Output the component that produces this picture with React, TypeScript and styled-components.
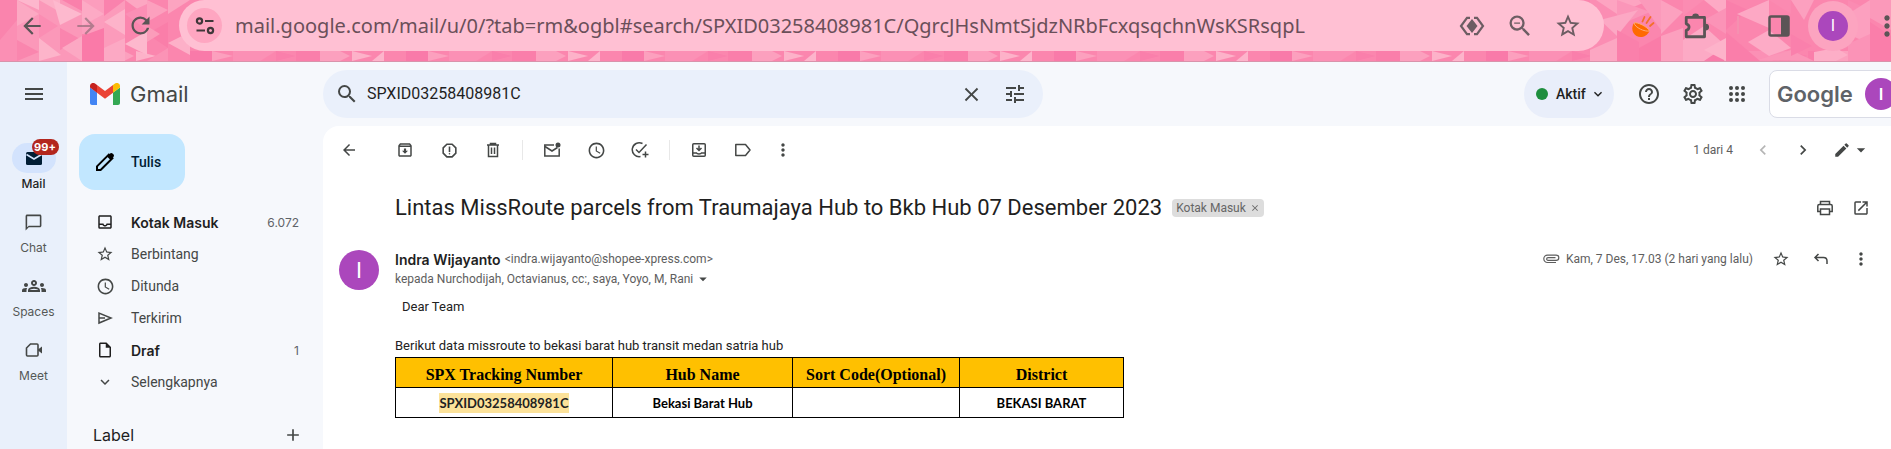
import React from "react";
import styled, { createGlobalStyle, css } from "styled-components";
import {
  MdAdd,
  MdArrowBack,
  MdArrowDropDown,
  MdArrowForward,
  MdChevronLeft,
  MdChevronRight,
  MdClose,
  MdEdit,
  MdHelpOutline,
  MdKeyboardArrowDown,
  MdMenu,
  MdMoreVert,
  MdOpenInNew,
  MdOutlineArchive,
  MdOutlineChatBubbleOutline,
  MdOutlineGroups,
  MdOutlineInbox,
  MdOutlineInsertDriveFile,
  MdOutlineReport,
  MdOutlineSettings,
  MdRefresh,
  MdSchedule,
  MdSearch,
  MdStarBorder,
  MdTune,
  MdZoomOut,
} from "react-icons/md";

const ui = `Inter, Roboto, "Liberation Sans", sans-serif`;
const text = `Roboto, "Liberation Sans", sans-serif`;

const Global = createGlobalStyle`
  * { box-sizing: border-box; }
  body { margin: 0; overflow: hidden; font-family: ${ui}; color: #1f1f1f; background: #f6f8fc; }
  button, input { font: inherit; color: inherit; }
  a { color: inherit; text-decoration: none; }
`;

const Page = styled.div`
  display: flex;
  flex-direction: column;
  min-height: 100vh;
`;

/* ---------- browser bar ---------- */

const BrowserBar = styled.header`
  position: relative;
  display: flex;
  align-items: flex-start;
  height: 62px;
  padding-left: 5px;
  border-bottom: 1px solid #d993ab;
  background: #fb86ae;
  overflow: hidden;
`;

const Mosaic = styled.svg<{ $side: "left" | "right" | "all" }>`
  position: absolute;
  top: 0;
  height: 61px;
  ${(p) => p.$side === "left" && css`left: 0; width: 200px;`}
  ${(p) => p.$side === "right" && css`right: 0; width: 301px;`}
  ${(p) => p.$side === "all" && css`left: 0; width: 100%;`}
`;

const BarButton = styled.button<{ $dim?: boolean }>`
  position: relative;
  display: flex;
  align-items: center;
  justify-content: center;
  flex: none;
  width: 54px;
  height: 51px;
  padding: 0;
  border: 0;
  background: none;
  color: #5b5456;
  opacity: ${(p) => (p.$dim ? 0.45 : 1)};
`;

const BarDivider = styled.span`
  position: relative;
  flex: none;
  width: 2px;
  height: 18px;
  margin: 16px 13px;
  background: #f590b0;
`;

const BarTools = styled.div`
  display: flex;
  flex: none;
  margin-left: 12px;
  margin-right: -23px;
`;

const Halo = styled.span`
  display: flex;
  align-items: center;
  justify-content: center;
  width: 50px;
  height: 50px;
  border-radius: 50%;
  background: #fca4c0;
`;

const Initial = styled.span<{ $size: number }>`
  display: flex;
  align-items: center;
  justify-content: center;
  flex: none;
  width: ${(p) => p.$size}px;
  height: ${(p) => p.$size}px;
  border-radius: 50%;
  background: #ab47bc;
  color: #fff;
  font-family: ${text};
  font-size: ${(p) => (p.$size > 36 ? 22 : 16)}px;
`;

const Omnibox = styled.div`
  position: relative;
  display: flex;
  align-items: center;
  flex: 1;
  min-width: 0;
  height: 51px;
  margin-left: 12px;
  padding-left: 8px;
  padding-right: 12px;
  border-radius: 26px;
  background: #ffc0d3;
`;

const SiteButton = styled.button`
  display: flex;
  align-items: center;
  justify-content: center;
  flex: none;
  width: 35px;
  height: 35px;
  padding: 0;
  border: 0;
  border-radius: 50%;
  background: #fea6c1;
  color: #40373a;
`;

const Address = styled.input`
  flex: 1;
  min-width: 0;
  margin-left: 13px;
  padding: 0;
  border: 0;
  outline: 0;
  background: none;
  color: #6a4f59;
  font-family: "Noto Sans", "Open Sans", sans-serif;
  font-size: 20px;
  line-height: 30px;
`;

const OmniIcon = styled.button`
  display: flex;
  align-items: center;
  justify-content: center;
  flex: none;
  width: 48px;
  height: 48px;
  padding: 0;
  border: 0;
  background: none;
  color: #6d5d63;
`;

/* ---------- mail shell ---------- */

const Shell = styled.div`
  display: flex;
  flex: 1;
  background: #f6f8fc;
`;

const Rail = styled.nav`
  display: flex;
  flex-direction: column;
  align-items: center;
  flex: none;
  width: 67px;
  padding-top: 20px;
  background: #e9f0fb;
`;

const PlainButton = styled.button<{ $size?: number; $color?: string }>`
  display: flex;
  align-items: center;
  justify-content: center;
  flex: none;
  width: ${(p) => p.$size ?? 24}px;
  height: ${(p) => p.$size ?? 24}px;
  padding: 0;
  border: 0;
  background: none;
  color: ${(p) => p.$color ?? "#444746"};
`;

const RailItem = styled.a`
  display: flex;
  flex-direction: column;
  align-items: center;
  width: 100%;
  height: 64px;
  font-size: 12px;
  line-height: 16px;
  color: #444746;
`;

const RailList = styled.div`
  width: 100%;
  padding-top: 37px;
`;

const RailIcon = styled.span<{ $active?: boolean }>`
  position: relative;
  display: flex;
  align-items: center;
  justify-content: center;
  width: 44px;
  height: 30px;
  margin-bottom: 3px;
  border-radius: 15px;
  background: ${(p) => (p.$active ? "#d3e3fd" : "none")};
`;

const RailLabel = styled.span<{ $active?: boolean }>`
  font-weight: ${(p) => (p.$active ? 500 : 400)};
  color: ${(p) => (p.$active ? "#1f1f1f" : "#555856")};
`;

const Badge = styled.span`
  position: absolute;
  top: -4px;
  left: 20px;
  width: 27px;
  border-radius: 8px;
  background: #b3261e;
  color: #fff;
  font-size: 11px;
  font-weight: 700;
  line-height: 16px;
  text-align: center;
`;

const Main = styled.div`
  display: flex;
  flex-direction: column;
  flex: 1;
  min-width: 0;
`;

const TopBar = styled.div`
  display: flex;
  align-items: center;
  height: 64px;
`;

const Brand = styled.a`
  display: flex;
  align-items: center;
  flex: none;
  gap: 10px;
  width: 256px;
  padding-left: 23px;
  font-size: 22px;
  line-height: 28px;
  color: #444746;
`;

const SearchForm = styled.form`
  display: flex;
  align-items: center;
  flex: 0 1 720px;
  height: 48px;
  padding: 0 16px 0 12px;
  border-radius: 24px;
  background: #eaf0fb;
`;

const SearchInput = styled.input`
  flex: 1;
  min-width: 0;
  margin-left: 8px;
  padding: 0;
  border: 0;
  outline: 0;
  background: none;
  font-family: ${text};
  font-size: 16px;
  line-height: 24px;
  color: #1f1f1f;
`;

const SearchActions = styled.div`
  display: flex;
  gap: 20px;
`;

const TopActions = styled.div`
  display: flex;
  align-items: center;
  flex: none;
  margin-left: auto;
  margin-right: -14px;
`;

const Status = styled.button`
  display: flex;
  align-items: center;
  width: 90px;
  height: 48px;
  margin-right: 23px;
  padding: 0 0 0 12px;
  border: 0;
  border-radius: 24px;
  background: #e9eefa;
  font-family: ${text};
  font-size: 14px;
  font-weight: 500;
`;

const StatusText = styled.span`
  margin-right: 4px;
`;

const Dot = styled.span`
  width: 12px;
  height: 12px;
  margin-right: 8px;
  border-radius: 50%;
  background: #1e8e3e;
`;

const IconRow = styled.div`
  display: flex;
  gap: 20px;
`;

const Account = styled.a`
  display: flex;
  align-items: center;
  justify-content: space-between;
  width: 136px;
  height: 48px;
  margin-left: 20px;
  padding: 0 7px;
  border: 1px solid #dadce6;
  border-radius: 8px;
  background: #fff;
  color: #5f6368;
  font-size: 22px;
  font-weight: 600;
`;

const Columns = styled.div`
  display: flex;
  flex: 1;
`;

const Sidebar = styled.aside`
  display: flex;
  flex-direction: column;
  flex: none;
  width: 256px;
  padding: 8px 24px 0 12px;
`;

const Compose = styled.button`
  display: flex;
  align-items: center;
  align-self: flex-start;
  gap: 14px;
  width: 106px;
  height: 56px;
  padding: 0 0 0 14px;
  border: 0;
  border-radius: 16px;
  background: #c2e7ff;
  color: #001d35;
  font-family: ${text};
  font-size: 14px;
  font-weight: 500;
`;

const Folders = styled.nav`
  margin-top: 16px;
`;

const Folder = styled.a<{ $bold?: boolean }>`
  display: flex;
  align-items: center;
  height: 32px;
  padding-left: 16px;
  font-family: ${(p) => (p.$bold ? ui : text)};
  font-size: 14px;
  font-weight: ${(p) => (p.$bold ? 600 : 400)};
  color: ${(p) => (p.$bold ? "#1f1f1f" : "#444746")};
`;

const FolderIcon = styled.span`
  display: flex;
  align-items: center;
  justify-content: center;
  width: 20px;
`;

const FolderName = styled.span`
  flex: 1;
  margin-left: 16px;
`;

const Count = styled.span`
  font-size: 12px;
  font-weight: 400;
  color: #5f6368;
`;

const LabelHeader = styled.div`
  display: flex;
  align-items: center;
  justify-content: space-between;
  height: 24px;
  margin-top: 25px;
  margin-right: -6px;
  padding-left: 14px;
`;

const LabelTitle = styled.h2`
  margin: 0;
  font-size: 16px;
  font-weight: 400;
`;

const Panel = styled.main`
  flex: 1;
  min-width: 0;
  border-radius: 16px 0 0 0;
  background: #fff;
`;

const Toolbar = styled.div`
  display: flex;
  align-items: center;
  height: 48px;
  padding: 0 20px 0 4px;
`;

const ToolGroup = styled.div<{ $first?: boolean }>`
  display: flex;
  align-items: center;
  margin-left: ${(p) => (p.$first ? 12 : 0)}px;
`;

const ToolDivider = styled.span`
  width: 1px;
  height: 20px;
  margin: 0 7px;
  background: #e8e8e8;
`;

const Pager = styled.div`
  display: flex;
  align-items: center;
  margin-left: auto;
  font-family: ${text};
  font-size: 12px;
  color: #5e5e5e;
`;

const PagerText = styled.span`
  margin-right: 20px;
`;

const InputTools = styled.button`
  display: flex;
  align-items: center;
  justify-content: flex-end;
  width: 38px;
  height: 24px;
  padding: 0;
  border: 0;
  background: none;
  color: #444746;
`;

const SubjectRow = styled.div`
  display: flex;
  align-items: center;
  height: 32px;
  margin-top: 18px;
  padding: 0 18px 0 72px;
`;

const Subject = styled.h1`
  margin: 0;
  font-family: ${text};
  font-size: 22px;
  font-weight: 400;
  line-height: 28px;
  color: #1f1f1f;
`;

const Chip = styled.span`
  display: flex;
  align-items: center;
  gap: 4px;
  height: 18px;
  margin-left: 10px;
  padding: 0 4px;
  border-radius: 4px;
  background: #ddd;
  color: #666;
  font-family: ${text};
  font-size: 12px;
`;

const ChipClose = styled.button`
  display: flex;
  padding: 0;
  border: 0;
  background: none;
`;

const RowActions = styled.div<{ $gap: number }>`
  display: flex;
  align-items: center;
  gap: ${(p) => p.$gap}px;
  margin-left: auto;
`;

const Message = styled.article`
  display: grid;
  grid-template-columns: 72px 1fr;
  padding: 25px 18px 0 0;
`;

const AvatarCell = styled.div`
  padding: 1px 0 0 16px;
`;

const SenderLine = styled.div`
  display: flex;
  align-items: center;
  height: 20px;
`;

const Sender = styled.strong`
  font-size: 14px;
  font-weight: 600;
`;

const Email = styled.span`
  margin-left: 4px;
  font-family: ${text};
  font-size: 12px;
  color: #5e5e5e;
`;

const Meta = styled.span`
  display: flex;
  align-items: center;
  gap: 6px;
  font-family: ${text};
  font-size: 12px;
  color: #5e5e5e;
`;

const Recipients = styled.div`
  display: flex;
  align-items: center;
  height: 20px;
  font-family: ${text};
  font-size: 12px;
  color: #5e5e5e;
`;

const MailBody = styled.div`
  padding-top: 8px;
  font-family: ${text};
  color: #222;
`;

const Greeting = styled.p`
  margin: 0 0 19px 7px;
  font-size: 13px;
  line-height: 20px;
`;

const Intro = styled.p`
  margin: 0 0 1px;
  font-size: 13px;
  line-height: 20px;
`;

const Table = styled.table`
  width: 728px;
  table-layout: fixed;
  border-collapse: collapse;
  color: #000;
  text-align: center;
`;

const HeadCell = styled.th<{ $w: number }>`
  width: ${(p) => p.$w}px;
  height: 30px;
  padding: 4px 0 0;
  border: 1px solid #000;
  background: #ffc000;
  font-family: "Liberation Serif", serif;
  font-size: 16px;
  font-weight: 700;
`;

const Cell = styled.td`
  height: 30px;
  padding: 0;
  border: 1px solid #000;
  font-family: Lato, sans-serif;
  font-size: 13px;
  font-weight: 700;
`;

const Mark = styled.mark`
  padding: 2px 0;
  background: #fce29a;
  color: #222;
`;

/* ---------- drawings ---------- */

type Tri = [string, string];

const leftTris: Tri[] = [
  ["0,0 17,0 17,61 0,61", "#fa84ad"],
  ["0,40 17,20 17,61 0,61", "#fb8fb4"],
  ["17,0 82,0 82,61 17,61", "#fb98b9"],
  ["17,0 39,0 39,10", "#fdb7cd"],
  ["17,0 39,14 17,26", "#fca9c3"],
  ["17,40 39,52 17,61", "#fa86ae"],
  ["39,0 60,0 60,12", "#fcb0c7"],
  ["53,0 82,14 60,25", "#fdb9ce"],
  ["62,0 82,0 82,11", "#fa80ab"],
  ["39,14 58,26 39,38", "#fb8db3"],
  ["39,38 61,55 39,61", "#fdb4ca"],
  ["60,28 82,40 60,50", "#fa85ae"],
  ["62,48 82,36 82,61", "#fca8c3"],
  ["82,0 104,0 104,34 82,34", "#fc9dbd"],
  ["82,0 104,14 82,26", "#fdaac5"],
  ["82,36 104,28 104,61 82,61", "#fa7aa8"],
  ["104,0 125,0 125,61 104,61", "#fc9bbb"],
  ["104,22 125,9 125,35", "#fdb3ca"],
  ["104,0 125,0 104,16", "#fa82ad"],
  ["104,48 125,38 125,61 104,61", "#fca9c4"],
  ["125,0 147,0 147,16", "#fca7c2"],
  ["125,44 147,31 147,55", "#fdb8cd"],
  ["125,14 147,4 147,30", "#fb8fb5"],
  ["147,0 168,10 147,22", "#fca0be"],
  ["147,34 168,22 168,48", "#fa7ea9"],
  ["147,61 168,48 168,61", "#fb93b6"],
  ["168,0 190,0 168,14", "#fca4c0"],
  ["168,43 190,32 190,55", "#fdb0c8"],
  ["147,26 160,34 147,42", "#fb9cba"],
];

const rightTris: Tri[] = [
  ["0,0 27,0 27,61 0,61", "#fb8db3"],
  ["6,0 27,14 60,0", "#fda4c1"],
  ["27,0 60,12 27,26", "#fb96b9"],
  ["10,20 48,10 27,36", "#fca8c4"],
  ["0,50 27,38 27,61 0,61", "#fca6c2"],
  ["27,30 49,42 49,61 27,61", "#fa80ab"],
  ["49,48 71,36 71,61 49,61", "#fa7ca8"],
  ["49,0 71,0 71,30", "#fb9abb"],
  ["71,0 93,12 71,34", "#fca1bf"],
  ["71,36 93,28 93,61 71,61", "#fca0be"],
  ["93,0 114,0 93,16", "#fb8cb2"],
  ["93,40 114,26 136,46 114,61 93,61", "#fcaac5"],
  ["114,0 136,0 136,18", "#fdaac5"],
  ["114,20 136,8 136,34", "#fb93b7"],
  ["114,50 136,38 136,61", "#fdb3ca"],
  ["136,0 158,10 136,30", "#fa7fab"],
  ["136,32 170,61 136,61", "#fa7eaa"],
  ["147,14 179,0 179,28", "#fda8c4"],
  ["158,42 179,30 201,48 179,56", "#fdabc6"],
  ["179,0 201,0 201,14", "#fb8ab1"],
  ["168,60 201,50 224,61", "#fb96b8"],
  ["201,0 224,0 214,20", "#fca0bf"],
  ["201,34 222,46 201,56", "#fa80ac"],
  ["224,52 246,48 258,55 246,61 224,61", "#fdaec7"],
  ["258,0 280,10 258,18", "#fb8bb2"],
  ["258,14 280,0 280,44 258,34", "#fca0bf"],
  ["258,44 280,34 280,61 258,61", "#fb93b7"],
  ["280,0 301,0 301,30 280,18", "#fb99ba"],
  ["280,22 301,36 301,61 280,61", "#fa7eaa"],
];

const stripTris: Tri[] = [
  ["0,51 22,51 22,61 0,61", "#f97aa9"],
  ["22,51 43,56 22,61", "#fca0be"],
  ["43,51 86,51 70,61 43,61", "#fb90b5"],
  ["86,51 106,56 86,61", "#fa7fab"],
  ["106,51 130,51 130,61 106,61", "#fa7eaa"],
  ["130,51 150,51 160,56 150,61 130,61", "#fca0be"],
  ["162,51 182,56 162,61", "#fdb2c9"],
  ["182,61 194,51 194,61", "#fdb4cb"],
];

const tris = (list: Tri[]) =>
  list.map(([points, fill], i) => <polygon key={i} points={points} fill={fill} />);

const MosaicBackdrop = () => (
  <>
    <Mosaic $side="all" aria-hidden="true">
      <defs>
        <pattern id="strip" width="216" height="61" patternUnits="userSpaceOnUse" x="190">
          {tris(stripTris)}
        </pattern>
      </defs>
      <rect width="100%" height="61" fill="url(#strip)" />
    </Mosaic>
    <Mosaic $side="left" viewBox="0 0 200 61" aria-hidden="true">{tris(leftTris)}</Mosaic>
    <Mosaic $side="right" viewBox="0 0 301 61" aria-hidden="true">{tris(rightTris)}</Mosaic>
  </>
);

const SiteIcon = () => (
  <svg width="20" height="18" viewBox="0 0 20 18" fill="none" stroke="currentColor" strokeWidth="2.2">
    <circle cx="4.5" cy="4" r="2.6" />
    <path d="M10 4h8.500M1.500 13.500h8.500" />
    <circle cx="15.500" cy="13.500" r="2.600" />
  </svg>
);

const DiamondIcon = () => (
  <svg width="26" height="20" viewBox="0 0 26 20">
    <path d="M11 1.800H8L2 10l6 8.200h3M15 1.800h3L24 10l-6 8.200h-3" fill="none" stroke="currentColor" strokeWidth="2.200" />
    <path d="M13 3 18.500 10 13 17 7.500 10z" fill="currentColor" />
  </svg>
);

const BowlIcon = () => (
  <svg width="24" height="24" viewBox="0 0 24 24">
    <path d="M3 9C0 13.500 1 19.500 5.500 22c4.500 2.500 10.500.5 13-5z" fill="#ff6a00" />
    <path d="M3 9c3-1.500 14 4 15.500 8-5 1-14.500-3.500-15.500-8z" fill="#ff6a00" stroke="#ffab78" strokeWidth="1" />
    <path d="M11.500 7.500l2-4.500M15.500 9l4-6M19 12l3.500-3" stroke="#f4702a" strokeWidth="1.800" strokeLinecap="round" />
  </svg>
);

const PuzzleIcon = () => (
  <svg width="28" height="28" viewBox="0 0 26 26">
    <path d="M3 5h17v18H3v-6c3.500-1 3.500-5 0-6z" fill="none" stroke="currentColor" strokeWidth="2.600" strokeLinejoin="round" />
    <path d="M8.500 4.500a3.200 3.200 0 0 1 6.400 0zM21 10.800a3.200 3.200 0 0 1 0 6.400z" fill="currentColor" />
  </svg>
);

const SidePanelIcon = () => (
  <svg width="22" height="22" viewBox="0 0 22 22">
    <rect x="1.500" y="1.500" width="19" height="19" rx="1.500" fill="none" stroke="currentColor" strokeWidth="2.500" />
    <path d="M13 1h8v20h-8z" fill="currentColor" />
  </svg>
);

const GmailLogo = () => (
  <svg width="30" height="22" viewBox="0 0 30 22">
    <path d="M0 4.500v15.500c0 1.100.9 2 2 2h5V9.500z" fill="#4285f4" />
    <path d="M23 22h5c1.100 0 2-.9 2-2V4.500l-7 5z" fill="#34a853" />
    <path d="M23 2v7.800l7-5.300V3c0-2.600-3-4-5-2.500z" fill="#fbbc04" />
    <path d="M7 9.800V2l8 6 8-6v7.800l-8 6z" fill="#ea4335" />
    <path d="M0 3v1.500l7 5.300V2L5 .5C3-1 0 .4 0 3z" fill="#c5221f" />
  </svg>
);

const MailIcon = () => (
  <svg width="18" height="16" viewBox="0 0 18 16">
    <rect x="1" y="2" width="16" height="13" rx="1.500" fill="#001d35" />
    <path d="M1.500 4.500 9 9l7.500-4.500" fill="none" stroke="#d3e3fd" strokeWidth="1.600" />
  </svg>
);

const MeetIcon = () => (
  <svg width="18" height="16" viewBox="0 0 18 16">
    <path d="M5.500 2H12a1 1 0 0 1 1 1v10a1 1 0 0 1-1 1H2.500a1 1 0 0 1-1-1V6z" fill="none" stroke="currentColor" strokeWidth="1.600" />
    <path d="M13 7.500 17 4.500v7l-4-3z" fill="currentColor" />
  </svg>
);

const PencilIcon = () => (
  <svg width="24" height="24" viewBox="0 0 24 24">
    <path d="M4 20v-3.600L15.800 4.600l3.600 3.600L7.600 20z" fill="none" stroke="#000" strokeWidth="2" />
    <path d="m14 6.500 2.800-2.800c1-1 2-1 3 0l.6.600c.8.800.8 1.800 0 2.700L17.500 10z" fill="#000" />
  </svg>
);

const SendIcon = () => (
  <svg width="16" height="16" viewBox="0 0 16 16" fill="none" stroke="currentColor" strokeWidth="1.500">
    <path d="M2 3v10l12-5z" />
    <path d="M2 8h6" />
  </svg>
);

const TrashIcon = () => (
  <svg width="16" height="16" viewBox="0 0 16 16" fill="none" stroke="currentColor" strokeWidth="1.500">
    <path d="M2 3h12M5.500 2.500v-1h5v1M3.500 3v11.500h9V3M6.500 5.500v6.500M9.500 5.500v6.500" />
  </svg>
);

const UnreadIcon = () => (
  <svg width="18" height="16" viewBox="0 0 18 16">
    <path d="M11 3H1.800v11h14.400V6.500" fill="none" stroke="currentColor" strokeWidth="1.500" />
    <path d="m2 4.500 7 4.500 5.500-3.500" fill="none" stroke="currentColor" strokeWidth="1.500" />
    <circle cx="15" cy="3" r="2.500" fill="currentColor" />
  </svg>
);

const TaskIcon = () => (
  <svg width="18" height="18" viewBox="0 0 18 18" fill="none" stroke="currentColor" strokeWidth="1.500">
    <path d="M11.500 2.500A7 7 0 1 0 9.500 15.600" />
    <path d="m5 8.500 3 3 7.500-8M14.500 10.500v6M11.500 13.500h6" />
  </svg>
);

const MoveIcon = () => (
  <svg width="16" height="16" viewBox="0 0 16 16" fill="none" stroke="currentColor" strokeWidth="1.500">
    <rect x="1.750" y="1.750" width="12.500" height="12.500" rx="1" />
    <path d="M2 11h3.500c.5 1.300 4.500 1.300 5 0H14M8 3.500v4.500M5.500 6 8 8.500 10.500 6" />
  </svg>
);

const TagIcon = () => (
  <svg width="18" height="14" viewBox="0 0 18 14" fill="none" stroke="currentColor" strokeWidth="1.500">
    <path d="M1.800 1.500h9.700L16 7l-4.500 5.500H1.800z" strokeLinejoin="round" />
  </svg>
);

const PrintIcon = () => (
  <svg width="18" height="16" viewBox="0 0 18 16" fill="none" stroke="currentColor" strokeWidth="1.500">
    <path d="M4.500 4.500v-3h9v3M4.500 11.500H1.800V6c0-.8.700-1.500 1.500-1.500h11.400c.8 0 1.500.7 1.500 1.500v5.500h-2.700" />
    <path d="M4.500 9h9v5.500h-9z" />
  </svg>
);

const ReplyIcon = () => (
  <svg width="16" height="16" viewBox="0 0 16 16" fill="none" stroke="currentColor" strokeWidth="1.500">
    <path d="M5.500 3 2 6.500 5.500 10M2 6.500h8.500c2 0 3.500 1.500 3.500 3.500v3" />
  </svg>
);

const ClipIcon = () => (
  <svg width="18" height="12" viewBox="0 0 18 12" fill="none" stroke="currentColor" strokeWidth="1.200">
    <path d="M14 9.500H5.500a3.700 3.700 0 0 1 0-7.400h8.700a2.500 2.500 0 0 1 0 5.200H6a1.300 1.300 0 0 1 0-2.700h7.500" />
  </svg>
);

const AppsIcon = () => (
  <svg width="18" height="18" viewBox="0 0 18 18" fill="currentColor">
    {[3, 9, 15].map((y) => [3, 9, 15].map((x) => <circle key={`${x}-${y}`} cx={x} cy={y} r="2" />))}
  </svg>
);

/* ---------- data ---------- */

const folders = [
  { name: "Kotak Masuk", icon: <MdOutlineInbox size={18} />, bold: true, count: "6.072" },
  { name: "Berbintang", icon: <MdStarBorder size={18} /> },
  { name: "Ditunda", icon: <MdSchedule size={19} /> },
  { name: "Terkirim", icon: <SendIcon /> },
  { name: "Draf", icon: <MdOutlineInsertDriveFile size={18} />, bold: true, count: "1" },
  { name: "Selengkapnya", icon: <MdKeyboardArrowDown size={18} /> },
];

const columns = [
  { title: "SPX Tracking Number", width: 217 },
  { title: "Hub Name", width: 180 },
  { title: "Sort Code(Optional)", width: 167 },
  { title: "District", width: 164 },
];

export default function App() {
  return (
    <Page>
      <Global />
      <BrowserBar>
        <MosaicBackdrop />
        <BarButton aria-label="Back"><MdArrowBack size={26} /></BarButton>
        <BarButton aria-label="Forward" $dim><MdArrowForward size={26} /></BarButton>
        <BarButton aria-label="Reload"><MdRefresh size={27} /></BarButton>
        <Omnibox>
          <SiteButton aria-label="Site information"><SiteIcon /></SiteButton>
          <Address
            aria-label="Address"
            defaultValue="mail.google.com/mail/u/0/?tab=rm&ogbl#search/SPXID03258408981C/QgrcJHsNmtSjdzNRbFcxqsqchnWsKSRsqpL"
          />
          <OmniIcon aria-label="Page tools"><DiamondIcon /></OmniIcon>
          <OmniIcon aria-label="Zoom"><MdZoomOut size={28} /></OmniIcon>
          <OmniIcon aria-label="Bookmark"><MdStarBorder size={28} /></OmniIcon>
        </Omnibox>
        <BarTools>
          <BarButton aria-label="Extension"><BowlIcon /></BarButton>
          <BarButton aria-label="Extensions"><PuzzleIcon /></BarButton>
          <BarDivider />
          <BarButton aria-label="Side panel"><SidePanelIcon /></BarButton>
          <BarButton aria-label="Profile"><Halo><Initial $size={30}>I</Initial></Halo></BarButton>
          <BarButton aria-label="Browser menu"><MdMoreVert size={32} /></BarButton>
        </BarTools>
      </BrowserBar>

      <Shell>
        <Rail>
          <PlainButton aria-label="Menu utama"><MdMenu size={24} /></PlainButton>
          <RailList>
            <RailItem href="#mail">
              <RailIcon $active><MailIcon /><Badge>99+</Badge></RailIcon>
              <RailLabel $active>Mail</RailLabel>
            </RailItem>
            <RailItem href="#chat">
              <RailIcon><MdOutlineChatBubbleOutline size={19} /></RailIcon>
              <RailLabel>Chat</RailLabel>
            </RailItem>
            <RailItem href="#spaces">
              <RailIcon><MdOutlineGroups size={24} /></RailIcon>
              <RailLabel>Spaces</RailLabel>
            </RailItem>
            <RailItem href="#meet">
              <RailIcon><MeetIcon /></RailIcon>
              <RailLabel>Meet</RailLabel>
            </RailItem>
          </RailList>
        </Rail>

        <Main>
          <TopBar>
            <Brand href="#gmail"><GmailLogo />Gmail</Brand>
            <SearchForm>
              <PlainButton type="button" aria-label="Telusuri"><MdSearch size={24} /></PlainButton>
              <SearchInput aria-label="Telusuri email" defaultValue="SPXID03258408981C" />
              <SearchActions>
                <PlainButton type="button" aria-label="Hapus penelusuran"><MdClose size={23} /></PlainButton>
                <PlainButton type="button" aria-label="Opsi penelusuran"><MdTune size={24} /></PlainButton>
              </SearchActions>
            </SearchForm>
            <TopActions>
              <Status><Dot /><StatusText>Aktif</StatusText><MdKeyboardArrowDown size={16} /></Status>
              <IconRow>
                <PlainButton aria-label="Dukungan"><MdHelpOutline size={24} /></PlainButton>
                <PlainButton aria-label="Setelan"><MdOutlineSettings size={24} /></PlainButton>
                <PlainButton aria-label="Aplikasi Google"><AppsIcon /></PlainButton>
              </IconRow>
              <Account href="#account">Google<Initial $size={32}>I</Initial></Account>
            </TopActions>
          </TopBar>

          <Columns>
            <Sidebar>
              <Compose><PencilIcon />Tulis</Compose>
              <Folders>
                {folders.map((f) => (
                  <Folder key={f.name} href="#folder" $bold={f.bold}>
                    <FolderIcon>{f.icon}</FolderIcon>
                    <FolderName>{f.name}</FolderName>
                    {f.count && <Count>{f.count}</Count>}
                  </Folder>
                ))}
              </Folders>
              <LabelHeader>
                <LabelTitle>Label</LabelTitle>
                <PlainButton aria-label="Buat label baru"><MdAdd size={20} /></PlainButton>
              </LabelHeader>
            </Sidebar>

            <Panel>
              <Toolbar>
                <PlainButton $size={44} aria-label="Kembali"><MdArrowBack size={18} /></PlainButton>
                <ToolGroup $first>
                  <PlainButton $size={44} aria-label="Arsipkan"><MdOutlineArchive size={18} /></PlainButton>
                  <PlainButton $size={44} aria-label="Laporkan spam"><MdOutlineReport size={19} /></PlainButton>
                  <PlainButton $size={44} aria-label="Hapus"><TrashIcon /></PlainButton>
                </ToolGroup>
                <ToolDivider />
                <ToolGroup>
                  <PlainButton $size={44} aria-label="Tandai belum dibaca"><UnreadIcon /></PlainButton>
                  <PlainButton $size={44} aria-label="Tunda"><MdSchedule size={19} /></PlainButton>
                  <PlainButton $size={44} aria-label="Tambahkan ke Tasks"><TaskIcon /></PlainButton>
                </ToolGroup>
                <ToolDivider />
                <ToolGroup>
                  <PlainButton $size={44} aria-label="Pindahkan ke"><MoveIcon /></PlainButton>
                  <PlainButton $size={44} aria-label="Label"><TagIcon /></PlainButton>
                  <PlainButton $size={36} aria-label="Lainnya"><MdMoreVert size={20} /></PlainButton>
                </ToolGroup>
                <Pager>
                  <PagerText>1 dari 4</PagerText>
                  <PlainButton $size={20} $color="#b5b5b5" aria-label="Lebih baru"><MdChevronLeft size={20} /></PlainButton>
                  <PlainButton $size={60} aria-label="Lebih lama"><MdChevronRight size={20} /></PlainButton>
                  <InputTools aria-label="Alat masukan"><MdEdit size={18} /><MdArrowDropDown size={20} /></InputTools>
                </Pager>
              </Toolbar>

              <SubjectRow>
                <Subject>Lintas MissRoute parcels from Traumajaya Hub to Bkb Hub 07 Desember 2023</Subject>
                <Chip>Kotak Masuk<ChipClose aria-label="Hapus label"><MdClose size={10} /></ChipClose></Chip>
                <RowActions $gap={12}>
                  <PlainButton aria-label="Cetak"><PrintIcon /></PlainButton>
                  <PlainButton aria-label="Di jendela baru"><MdOpenInNew size={18} /></PlainButton>
                </RowActions>
              </SubjectRow>

              <Message>
                <AvatarCell><Initial $size={40}>I</Initial></AvatarCell>
                <div>
                  <SenderLine>
                    <Sender>Indra Wijayanto</Sender>
                    <Email>&lt;indra.wijayanto@shopee-xpress.com&gt;</Email>
                    <RowActions $gap={16}>
                      <Meta><ClipIcon />Kam, 7 Des, 17.03 (2 hari yang lalu)</Meta>
                      <PlainButton aria-label="Beri bintang"><MdStarBorder size={18} /></PlainButton>
                      <PlainButton aria-label="Balas"><ReplyIcon /></PlainButton>
                      <PlainButton aria-label="Opsi lainnya"><MdMoreVert size={20} /></PlainButton>
                    </RowActions>
                  </SenderLine>
                  <Recipients>
                    kepada Nurchodijah, Octavianus, cc:, saya, Yoyo, M, Rani
                    <PlainButton $size={20} aria-label="Tampilkan detail"><MdArrowDropDown size={18} /></PlainButton>
                  </Recipients>
                  <MailBody>
                    <Greeting>Dear Team</Greeting>
                    <Intro>Berikut data missroute to bekasi barat hub transit medan satria hub</Intro>
                    <Table>
                      <thead>
                        <tr>
                          {columns.map((c) => <HeadCell key={c.title} $w={c.width}>{c.title}</HeadCell>)}
                        </tr>
                      </thead>
                      <tbody>
                        <tr>
                          <Cell><Mark>SPXID03258408981C</Mark></Cell>
                          <Cell>Bekasi Barat Hub</Cell>
                          <Cell />
                          <Cell>BEKASI BARAT</Cell>
                        </tr>
                      </tbody>
                    </Table>
                  </MailBody>
                </div>
              </Message>
            </Panel>
          </Columns>
        </Main>
      </Shell>
    </Page>
  );
}
